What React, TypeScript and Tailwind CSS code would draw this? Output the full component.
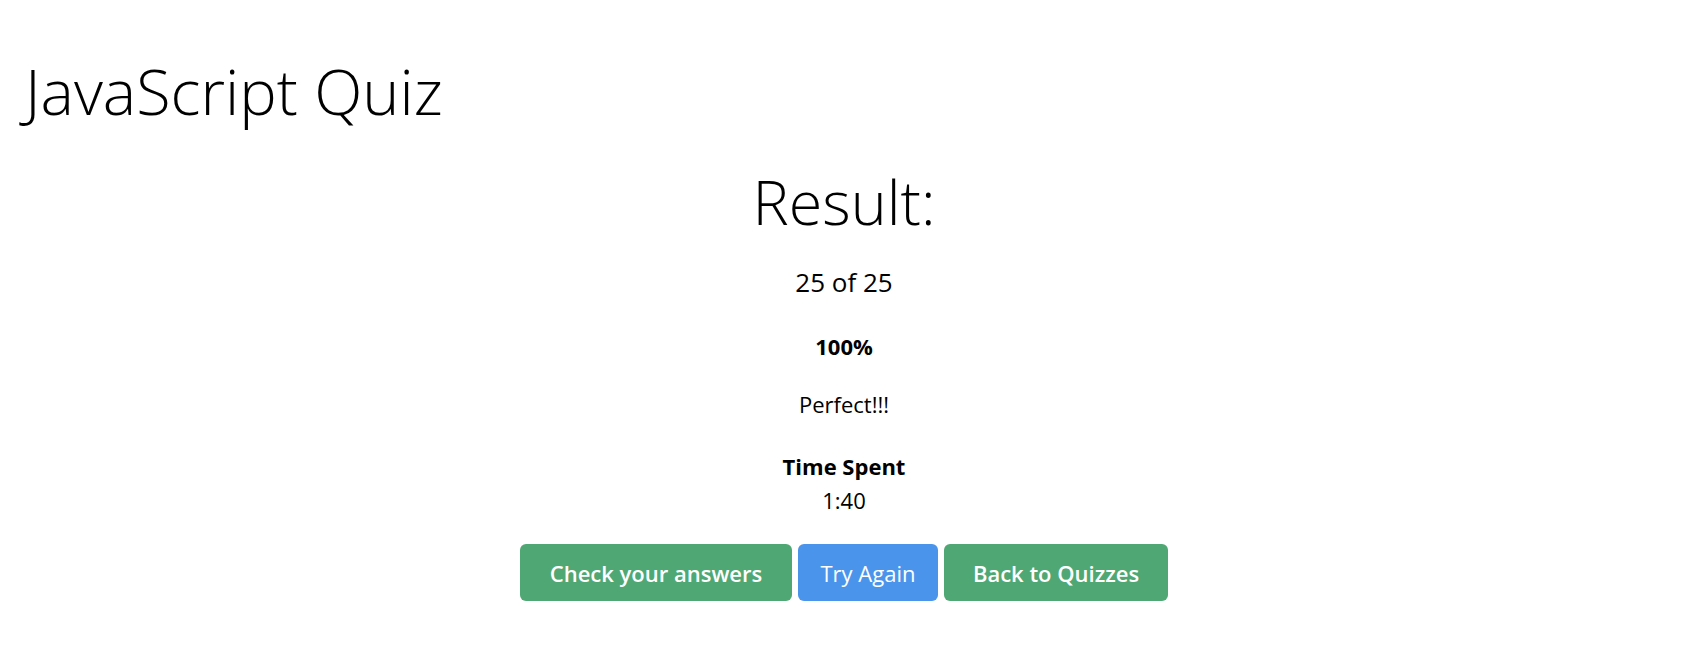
export default function App() {
  return (
    <div className="min-h-screen bg-white text-black pr-[6px] font-['Segoe_UI','Open_Sans',sans-serif]">
      {/* Page heading */}
      <h1 className="pl-[25px] pt-[59px] text-[63px] font-light leading-none">JavaScript Quiz</h1>

      {/* Result summary */}
      <div className="flex flex-col items-center">
        <h2 className="mt-[49px] text-[61px] font-light leading-none">Result:</h2>
        <p className="mt-[37px] text-[26px] leading-none">25 of 25</p>
        <p className="mt-[40px] text-[22px] font-bold leading-none">100%</p>
        <p className="mt-[36px] text-[22px] leading-none">Perfect!!!</p>
        <p className="mt-[40px] text-[22px] font-bold leading-none">Time Spent</p>
        <p className="mt-[12px] text-[22px] leading-none">1:40</p>

        {/* Actions */}
        <div className="mt-[33px] flex gap-[6px]">
          <button
            type="button"
            className="h-[57px] w-[272px] rounded-[6px] bg-[#4fa874] text-[22px] font-semibold leading-none text-white flex items-center justify-center"
          >
            Check your answers
          </button>
          <button
            type="button"
            className="h-[57px] w-[140px] rounded-[6px] bg-[#4a95eb] text-[22px] leading-none text-white flex items-center justify-center"
          >
            Try Again
          </button>
          <button
            type="button"
            className="h-[57px] w-[224px] rounded-[6px] bg-[#4fa874] text-[22px] font-semibold leading-none text-white flex items-center justify-center"
          >
            Back to Quizzes
          </button>
        </div>
      </div>
    </div>
  );
}
